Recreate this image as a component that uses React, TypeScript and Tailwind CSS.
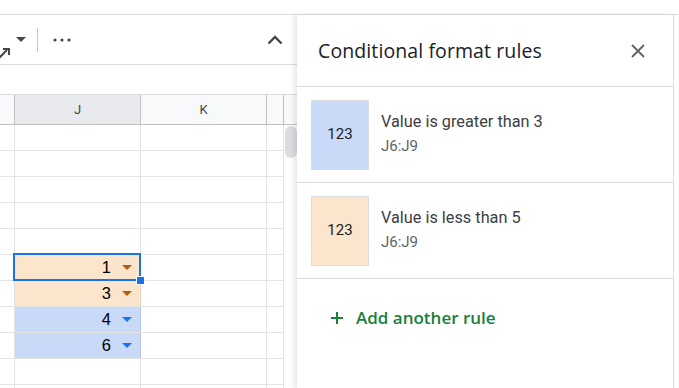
import React from "react";

type Cell = { value: string; fill: "orange" | "blue"; selected?: boolean };

const cells: Record<number, Cell> = {
  5: { value: "1", fill: "orange", selected: true },
  6: { value: "3", fill: "orange" },
  7: { value: "4", fill: "blue" },
  8: { value: "6", fill: "blue" },
};

const rules = [
  { title: "Value is greater than 3", range: "J6:J9", swatch: "bg-[#c9daf8]" },
  { title: "Value is less than 5", range: "J6:J9", swatch: "bg-[#fce5cd]" },
];

const Triangle = ({ color }: { color: string }) => (
  <svg width="10" height="5" viewBox="0 0 10 5" className="shrink-0">
    <path d="M0 0h10L5 5z" fill={color} />
  </svg>
);

const Toolbar = () => (
  <div className="h-[50px] shrink-0 border-b border-[#dadce0] flex items-center relative">
    <svg width="10" height="12" viewBox="0 0 10 12" className="absolute left-0 top-[33px]">
      <path d="M-2 11L7 2" stroke="#444746" strokeWidth="2" fill="none" />
      <path d="M3 1h6v6" stroke="#444746" strokeWidth="2" fill="none" />
    </svg>
    <div className="ml-[16px]">
      <Triangle color="#444746" />
    </div>
    <div className="ml-[11px] w-px h-[24px] bg-[#c7c7c7]" />
    <svg width="18" height="4" viewBox="0 0 18 4" className="ml-[15px]">
      <circle cx="2" cy="2" r="1.6" fill="#444746" />
      <circle cx="9" cy="2" r="1.6" fill="#444746" />
      <circle cx="16" cy="2" r="1.6" fill="#444746" />
    </svg>
    <svg width="16" height="10" viewBox="0 0 16 10" className="ml-auto mr-[14px]">
      <path d="M1.5 8.5L8 2l6.5 6.5" stroke="#444746" strokeWidth="2.4" fill="none" />
    </svg>
  </div>
);

const Sheet = () => (
  <div className="w-[297px] shrink-0 flex flex-col min-h-0 overflow-hidden">
    <Toolbar />
    <div className="h-[30px] shrink-0 border-b border-[#dadce0]" />
    <div className="h-[30px] shrink-0 flex border-b border-[#c0c0c0] bg-[#f8f9fa] text-[13px] text-[#444746] font-['Roboto',sans-serif]">
      <div className="w-[15px] border-r border-[#c0c0c0]" />
      <div className="w-[126px] border-r border-[#c0c0c0] bg-[#e8eaed] flex items-center justify-center">J</div>
      <div className="w-[126px] border-r border-[#c0c0c0] flex items-center justify-center">K</div>
      <div className="w-[17px] border-r border-[#c0c0c0]" />
      <div className="flex-1" />
    </div>
    <div className="flex-1 min-h-0 flex relative">
      <div className="w-[284px] flex flex-col">
        {Array.from({ length: 11 }).map((_, i) => {
          const cell = cells[i];
          return (
            <div key={i} className="h-[26px] shrink-0 flex border-b border-[#e2e3e3]">
              <div className="w-[15px] border-r border-[#e2e3e3]" />
              <div
                className={`w-[126px] border-r relative flex items-center justify-end pr-[8px] gap-[11px] text-[16.5px] text-black font-['Liberation_Sans',Arial,sans-serif] ${
                  cell
                    ? cell.fill === "orange"
                      ? "bg-[#fce5cd] border-[#e8d3bd]"
                      : "bg-[#c9daf8] border-[#b4c6e6]"
                    : "border-[#e2e3e3]"
                }`}
              >
                {cell && (
                  <>
                    <span>{cell.value}</span>
                    <Triangle color={cell.fill === "orange" ? "#b45f06" : "#1a73e8"} />
                  </>
                )}
                {cell?.selected && (
                  <>
                    <div className="absolute left-[-2px] top-[-2px] right-[-1px] bottom-[-1px] border-2 border-[#1a73e8] pointer-events-none" />
                    <div className="absolute right-[-5px] bottom-[-5px] w-[9px] h-[9px] bg-[#1a73e8] border border-white z-10" />
                  </>
                )}
              </div>
              <div className="w-[126px] border-r border-[#e2e3e3]" />
              <div className="w-[17px] border-r border-[#e2e3e3]" />
            </div>
          );
        })}
      </div>
      <div className="flex-1 pt-[1px] pl-[1px]">
        <div className="w-[12px] h-[32px] rounded-full bg-[#dadce0]" />
      </div>
    </div>
  </div>
);

const Panel = () => (
  <div className="w-[377px] shrink-0 border-r border-[#dadce0] bg-white flex flex-col relative z-10 shadow-[-3px_0_4px_rgba(60,64,67,0.12)]">
    <div className="h-[72px] shrink-0 border-b border-[#dadce0] flex items-center pl-[21px] pr-[27px]">
      <span className="text-[19.5px] text-[#202124] font-['Open_Sans',sans-serif] tracking-[0.1px]">
        Conditional format rules
      </span>
      <svg width="16" height="16" viewBox="0 0 16 16" className="ml-auto">
        <path d="M2 2l12 12M14 2L2 14" stroke="#5f6368" strokeWidth="1.8" />
      </svg>
    </div>
    {rules.map((rule) => (
      <div key={rule.title} className="h-[96px] shrink-0 border-b border-[#dadce0] flex items-center pl-[14px]">
        <div
          className={`w-[58px] h-[70px] ${rule.swatch} border border-[#dadce0] flex items-center justify-center text-[15px] text-[#202124] font-['Roboto',sans-serif]`}
        >
          123
        </div>
        <div className="ml-[12px] flex flex-col font-['Roboto',sans-serif] -mt-[1px]">
          <span className="text-[16.3px] text-[#3c4043] leading-[22px]">{rule.title}</span>
          <span className="text-[15px] text-[#5f6368] leading-[22px] mt-[2px]">{rule.range}</span>
        </div>
      </div>
    ))}
    <div className="h-[78px] shrink-0 flex items-center pl-[34px] gap-[13px] text-[#188038]">
      <svg width="12" height="12" viewBox="0 0 12 12">
        <path d="M6 0v12M0 6h12" stroke="#188038" strokeWidth="2" />
      </svg>
      <span className="text-[17px] font-semibold font-['Open_Sans',sans-serif]">Add another rule</span>
    </div>
  </div>
);

export default function App() {
  return (
    <div className="w-[679px] h-[388px] overflow-hidden bg-white flex flex-col">
      <div className="h-[15px] shrink-0 border-b border-[#dadce0]" />
      <div className="flex-1 flex min-h-0">
        <Sheet />
        <Panel />
        <div className="flex-1" />
      </div>
    </div>
  );
}
